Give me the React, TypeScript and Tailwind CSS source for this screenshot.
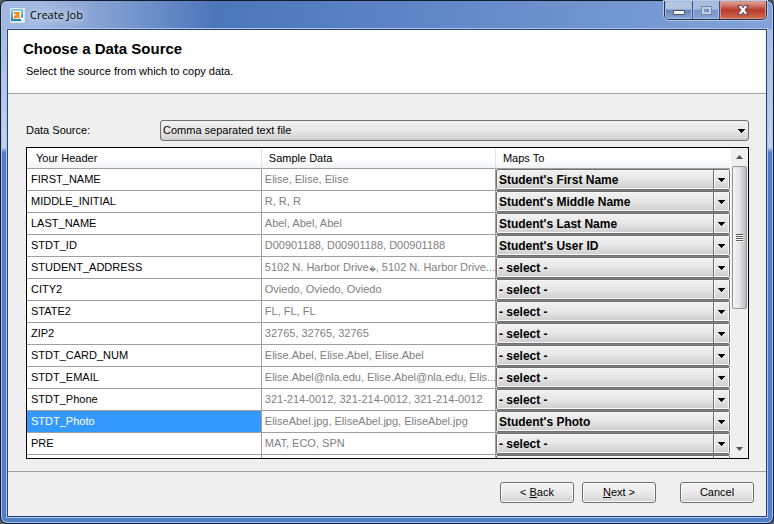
import React, { useState } from 'react';

interface FieldMapping {
    header: string;
    sample: string;
    mapsTo: string;
}

const FIELD_OPTIONS = [
    '- select -',
    "Student's First Name",
    "Student's Middle Name",
    "Student's Last Name",
    "Student's User ID",
    "Student's Photo",
];

const INITIAL_ROWS: FieldMapping[] = [
    { header: 'FIRST_NAME', sample: 'Elise, Elise, Elise', mapsTo: "Student's First Name" },
    { header: 'MIDDLE_INITIAL', sample: 'R, R, R', mapsTo: "Student's Middle Name" },
    { header: 'LAST_NAME', sample: 'Abel, Abel, Abel', mapsTo: "Student's Last Name" },
    { header: 'STDT_ID', sample: 'D00901188, D00901188, D00901188', mapsTo: "Student's User ID" },
    { header: 'STUDENT_ADDRESS', sample: '5102 N. Harbor Drive\uFFFD, 5102 N. Harbor Drive...', mapsTo: '- select -' },
    { header: 'CITY2', sample: 'Oviedo, Oviedo, Oviedo', mapsTo: '- select -' },
    { header: 'STATE2', sample: 'FL, FL, FL', mapsTo: '- select -' },
    { header: 'ZIP2', sample: '32765, 32765, 32765', mapsTo: '- select -' },
    { header: 'STDT_CARD_NUM', sample: 'Elise.Abel, Elise.Abel, Elise.Abel', mapsTo: '- select -' },
    { header: 'STDT_EMAIL', sample: 'Elise.Abel@nla.edu, Elise.Abel@nla.edu, Elis...', mapsTo: '- select -' },
    { header: 'STDT_Phone', sample: '321-214-0012, 321-214-0012, 321-214-0012', mapsTo: '- select -' },
    { header: 'STDT_Photo', sample: 'EliseAbel.jpg, EliseAbel.jpg, EliseAbel.jpg', mapsTo: "Student's Photo" },
    { header: 'PRE', sample: 'MAT, ECO, SPN', mapsTo: '- select -' },
    { header: '', sample: '', mapsTo: '- select -' },
];

const buttonClass =
    'h-[21px] w-[74px] rounded-[3px] border border-[#707070] bg-linear-to-b from-[#f4f4f4] via-[#ebebeb] to-[#d2d2d2] leading-none shadow-[inset_0_0_0_1px_#fafafa]';

function DownArrow() {
    return (
        <svg viewBox="0 0 7 4" className="h-1 w-[7px]" shapeRendering="crispEdges" aria-hidden="true">
            <path d="M0 0h7v1H6v1H5v1H4v1H3V3H2V2H1V1H0z" fill="#000" />
        </svg>
    );
}

function AppIcon() {
    return (
        <svg viewBox="0 0 15 15" className="size-[15px]" aria-hidden="true">
            <defs>
                <linearGradient id="iconFrame" x1="0" y1="0" x2="0" y2="1">
                    <stop offset="0" stopColor="#8fd0e2" />
                    <stop offset="1" stopColor="#1583b4" />
                </linearGradient>
            </defs>
            <rect width="15" height="15" fill="#dbe6ea" />
            <path d="M1 1h12v9l-1.500 3H1z" fill="url(#iconFrame)" />
            <path d="M3 3h8v8H3z" fill="#fdf6ea" />
            <path d="M4 4h5.500v6.500H8V8.500L6.500 10.500H4V8l3-2H4z" fill="#f08a1d" />
            <path d="M10.500 10l.5 3 1-1 1.500 2 .5-4.500z" fill="#fff" />
        </svg>
    );
}

function WindowControls() {
    return (
        <div className="flex h-[19px] overflow-hidden rounded-b-[5px] border border-t-0 border-[#26304a] shadow-[0_0_0_1px_#b5c9e8]">
            <button
                aria-label="Minimize"
                className="flex w-[28px] items-center justify-center border-r border-[#3d5482] bg-linear-to-b from-[#b4c5e0] from-45% via-[#6684b8] via-50% to-[#89a7d8] shadow-[inset_0_0_0_1px_#a6bce0]"
            >
                <svg viewBox="0 0 12 5" className="mt-1 h-[5px] w-3" aria-hidden="true">
                    <rect x=".5" y=".5" width="11" height="4" rx=".5" fill="#f6f6f6" stroke="#4b5368" />
                </svg>
            </button>
            <button
                aria-label="Maximize"
                disabled
                className="flex w-[27px] items-center justify-center border-r border-[#3d5482] bg-linear-to-b from-[#a9bedf] from-45% via-[#7896c8] via-50% to-[#86a4d6] shadow-[inset_0_0_0_1px_#a6bce0]"
            >
                <svg viewBox="0 0 11 9" className="h-[9px] w-[11px]" aria-hidden="true">
                    <rect x=".5" y=".5" width="10" height="8" fill="#c3cfe2" stroke="#7288b0" />
                    <rect x="3.500" y="3.500" width="4" height="2" fill="#90a8d0" stroke="#7288b0" />
                </svg>
            </button>
            <button
                aria-label="Close"
                className="flex w-[46px] items-center justify-center bg-linear-to-b from-[#dba097] from-5% via-[#b8382b] via-50% to-[#cf6f50] shadow-[inset_0_0_0_1px_#d99385]"
            >
                <svg viewBox="0 0 12 10" className="h-[10px] w-3" aria-hidden="true">
                    <path
                        d="M.7.600h3.600L6 2.700 7.700.600h3.600L8 5l3.300 4.400H7.700L6 7.300 4.300 9.400H.7L4 5z"
                        fill="#fff"
                        stroke="#4b4656"
                        strokeWidth="1"
                    />
                </svg>
            </button>
        </div>
    );
}

function ScrollBar() {
    return (
        <div className="flex w-[17px] shrink-0 flex-col bg-[#efefef]" aria-hidden="true">
            <div className="flex h-[18px] items-center justify-center">
                <svg viewBox="0 0 7 4" className="h-1 w-[7px]">
                    <path d="M3.500 0L7 4H0z" fill="#555" />
                </svg>
            </div>
            <div className="mx-px flex h-[143px] items-center justify-center rounded-[2px] border border-[#969696] bg-linear-to-r from-[#f5f5f5] via-[#e4e4e6] to-[#bcbcc0]">
                <svg viewBox="0 0 7 8" className="h-2 w-[7px]" shapeRendering="crispEdges">
                    <path d="M0 1h7v1H0zM0 3h7v1H0zM0 5h7v1H0zM0 7h7v1H0z" fill="#fff" />
                    <path d="M0 0h7v1H0zM0 2h7v1H0zM0 4h7v1H0zM0 6h7v1H0z" fill="#5a5a5a" />
                </svg>
            </div>
            <div className="mt-auto flex h-[18px] items-center justify-center">
                <svg viewBox="0 0 7 4" className="h-1 w-[7px]">
                    <path d="M0 0h7L3.500 4z" fill="#555" />
                </svg>
            </div>
        </div>
    );
}

// The fallback glyph for undecodable bytes is much wider than the letters around it
function SampleText({ text }: { text: string }) {
    const parts = text.split('\uFFFD');
    return (
        <>
            {parts.map((part, i) => (
                <React.Fragment key={i}>
                    {i > 0 && <span className="text-[7px]">{'\uFFFD'}</span>}
                    {part}
                </React.Fragment>
            ))}
        </>
    );
}

export default function App() {
    const [source, setSource] = useState('Comma separated text file');
    const [rows, setRows] = useState(INITIAL_ROWS);
    const [selected, setSelected] = useState('STDT_Photo');

    const handleMapping = (index: number, value: string) => {
        setRows(rows.map((row, i) => (i === index ? { ...row, mapsTo: value } : row)));
    };

    return (
        <div className="h-screen bg-[#55585f] font-['Liberation_Sans',Arial,sans-serif] text-[11px] text-black">
            <div className="flex h-full flex-col rounded-[7px] border border-[#141b2c] bg-linear-to-b from-[#9fb6df] from-0% via-[#c3d3ee] via-28% to-[#4f7fc6] to-29% px-1.5 pb-1.5 shadow-[inset_0_0_0_1px_#a9c4ec]">
                {/* Title bar */}
                <header className="-mx-[5px] flex h-[28px] shrink-0 items-start justify-between rounded-t-[6px] bg-linear-to-r from-[#a3b8e0] from-5% via-[#4b76b9] via-28% to-[#82a3da] pr-[5px] pl-2">
                    <div className="flex h-[28px] items-center gap-[5px]">
                        <AppIcon />
                        <h1 className="font-['Open_Sans','Noto_Sans',sans-serif] [text-shadow:0_0_6px_#dbe6f7,0_0_10px_#dbe6f7]">
                            Create Job
                        </h1>
                    </div>
                    <WindowControls />
                </header>

                <main className="flex min-h-0 flex-1 flex-col border border-[#2c4470] bg-[#efefef] shadow-[0_0_0_1px_#a9c4ec]">
                    <section className="h-[64px] shrink-0 border-b border-[#a0a0a0] bg-white px-[15px] pt-[9px]">
                        <h2 className="text-[15px] leading-5 font-bold">Choose a Data Source</h2>
                        <p className="mt-1 pl-[3px] leading-4">Select the source from which to copy data.</p>
                    </section>

                    <section className="flex min-h-0 flex-1 flex-col gap-[6px] pt-[26px] pr-[17px] pb-3 pl-[18px]">
                        {/* Data source */}
                        <div className="flex items-center">
                            <label htmlFor="source" className="w-[134px] shrink-0">
                                Data Source:
                            </label>
                            <div className="relative flex-1">
                                <select
                                    id="source"
                                    value={source}
                                    onChange={(e) => setSource(e.target.value)}
                                    className="block h-[21px] w-full appearance-none rounded-[3px] border border-[#707070] bg-linear-to-b from-[#f2f2f2] via-[#e8e8e8] to-[#cfcfcf] pl-[2px]"
                                >
                                    <option>Comma separated text file</option>
                                </select>
                                <span className="pointer-events-none absolute inset-y-0 right-1 flex items-center">
                                    <DownArrow />
                                </span>
                            </div>
                        </div>

                        {/* Field mapping */}
                        <div className="flex min-h-0 flex-1 border border-black bg-white">
                            <div className="min-w-0 flex-1 overflow-hidden pr-px">
                                <table className="w-full table-fixed border-separate border-spacing-0">
                                    <thead>
                                        <tr className="h-[21px] bg-linear-to-b from-white from-50% to-[#f0f1f3] text-left">
                                            <th className="w-[33.4%] border-r border-b border-r-[#e0e3e8] border-b-[#a0a0a0] p-0 pl-[9px] font-normal">Your Header</th>
                                            <th className="w-[33.3%] border-r border-b border-r-[#e0e3e8] border-b-[#a0a0a0] p-0 pl-[7px] font-normal">Sample Data</th>
                                            <th className="border-b border-[#a0a0a0] p-0 pl-[7px] font-normal">Maps To</th>
                                        </tr>
                                    </thead>
                                    <tbody>
                                        {rows.map((row, i) => (
                                            <tr key={i} className="h-[22px]" onClick={() => setSelected(row.header)}>
                                                <td
                                                    className={`truncate border-r border-b border-[#a0a0a0] p-0 pl-1 ${
                                                        selected === row.header ? 'bg-[#3399ff] text-white' : ''
                                                    }`}
                                                >
                                                    {row.header}
                                                </td>
                                                <td className="border-r border-b border-[#a0a0a0] p-0 pl-[3px] whitespace-nowrap text-[#808080]">
                                                    <SampleText text={row.sample} />
                                                </td>
                                                <td className="border-b border-[#808080] p-0">
                                                    <div className="relative">
                                                        <select
                                                            aria-label={`Maps to for ${row.header}`}
                                                            value={row.mapsTo}
                                                            onChange={(e) => handleMapping(i, e.target.value)}
                                                            className="block h-[21px] w-full appearance-none rounded-[2px] border border-[#707070] bg-linear-to-b from-[#f2f2f2] via-[#e6e6e6] to-[#cdcdcd] pl-[2px] text-[12px] font-bold shadow-[inset_0_0_0_1px_#f8f8f8]"
                                                        >
                                                            {FIELD_OPTIONS.map((option) => (
                                                                <option key={option}>{option}</option>
                                                            ))}
                                                        </select>
                                                        <span className="pointer-events-none absolute inset-y-px right-px flex w-[16px] items-center justify-center border-l border-[#707070] shadow-[inset_0_0_0_1px_#f8f8f8]">
                                                            <DownArrow />
                                                        </span>
                                                    </div>
                                                </td>
                                            </tr>
                                        ))}
                                    </tbody>
                                </table>
                            </div>
                            <ScrollBar />
                        </div>
                    </section>

                    <footer className="flex h-[45px] shrink-0 items-start justify-end gap-2 border-t border-[#a0a0a0] pt-[10px] pr-3">
                        <button className={buttonClass}>
                            &lt; <u>B</u>ack
                        </button>
                        <button className={buttonClass}>
                            <u>N</u>ext &gt;
                        </button>
                        <button className={`${buttonClass} ml-4`}>Cancel</button>
                    </footer>
                </main>
            </div>
        </div>
    );
}
